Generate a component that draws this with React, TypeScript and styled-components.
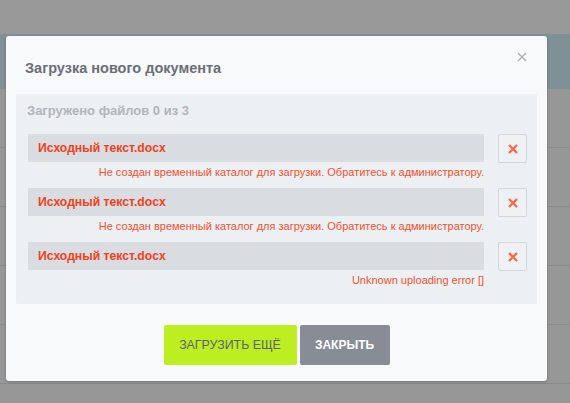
import React from "react";
import styled, { createGlobalStyle } from "styled-components";

const Global = createGlobalStyle`
  html, body { margin: 0; padding: 0; }
  body { font-family: "Liberation Sans", Arial, sans-serif; background: #979797; }
`;

const Page = styled.div`
  position: relative;
  width: 570px;
  height: 403px;
  overflow: hidden;
  display: flex;
  flex-direction: column;
`;

const TopBar = styled.div`
  height: 34px;
  background: #999999;
`;

const Band = styled.div`
  height: 55px;
  background: #7f9196;
`;

const BgRow = styled.div`
  height: 58px;
  border-bottom: 1px solid #8b8b8b;
  background: #979797;
`;

const Modal = styled.div`
  position: absolute;
  left: 6px;
  top: 36px;
  width: 541px;
  height: 345px;
  box-sizing: border-box;
  background: #f8f9fb;
  border-radius: 3px;
  box-shadow: 0 1px 3px rgba(0, 0, 0, 0.25);
  display: flex;
  flex-direction: column;
`;

const Header = styled.div`
  height: 58px;
  display: flex;
  align-items: center;
  padding: 0 19px;
  padding-top: 6px;
  box-sizing: border-box;
`;

const Title = styled.h3`
  margin: 0;
  font-size: 14.5px;
  font-weight: bold;
  color: #6a6e77;
`;

const Close = styled.button`
  position: absolute;
  right: 20px;
  top: 16px;
  width: 10px;
  height: 10px;
  padding: 0;
  border: 0;
  background: none;
  display: flex;
  align-items: center;
  justify-content: center;
`;

const Panel = styled.div`
  margin: 0 10px;
  background: #edf0f3;
  border-radius: 2px;
  padding: 9px 10px 16px 12px;
  height: 210px;
  box-sizing: border-box;
`;

const Counter = styled.div`
  font-size: 13px;
  line-height: 16px;
  font-weight: bold;
  color: #b2b5ba;
  letter-spacing: 0;
  margin: 0 0 15px -1px;
`;

const FileList = styled.div`
  display: flex;
  flex-direction: column;
  gap: 7px;
`;

const FileRow = styled.div`
  display: grid;
  grid-template-columns: 1fr 29px;
  column-gap: 14px;
`;

const FileBar = styled.div`
  height: 28px;
  background: #d9dce0;
  display: flex;
  align-items: center;
  padding-left: 10px;
  font-size: 12.2px;
  font-weight: bold;
  color: #f0421b;
`;

const RemoveButton = styled.button`
  width: 29px;
  height: 29px;
  box-sizing: border-box;
  border: 1px solid #d3d6da;
  border-radius: 2px;
  background: #eef1f4;
  padding: 0;
  display: flex;
  align-items: center;
  justify-content: center;
`;

const ErrorText = styled.div`
  grid-column: 1;
  height: 18px;
  line-height: 18px;
  text-align: right;
  font-size: 11px;
  color: #f3502e;
`;

const Footer = styled.div`
  display: flex;
  justify-content: center;
  gap: 3px;
  margin-top: 21px;
`;

const Btn = styled.button<{ $variant: "green" | "gray" }>`
  height: 40px;
  border: 0;
  border-radius: 2px;
  padding: 0;
  font-family: "Liberation Sans", Arial, sans-serif;
  font-size: ${(p) => (p.$variant === "green" ? "12.4px" : "12px")};
  text-transform: uppercase;
  font-weight: ${(p) => (p.$variant === "gray" ? "bold" : "normal")};
  background: ${(p) => (p.$variant === "green" ? "#bdee21" : "#878c96")};
  color: ${(p) => (p.$variant === "green" ? "#5b6272" : "#ffffff")};
  width: ${(p) => (p.$variant === "green" ? "133px" : "90px")};
`;

const CrossIcon = ({ size, color, stroke }: { size: number; color: string; stroke: number }) => (
  <svg width={size} height={size} viewBox="0 0 10 10">
    <path d="M1 1 L9 9 M9 1 L1 9" stroke={color} strokeWidth={stroke} strokeLinecap="butt" />
  </svg>
);

const files = [
  { name: "Исходный текст.docx", error: "Не создан временный каталог для загрузки. Обратитесь к администратору." },
  { name: "Исходный текст.docx", error: "Не создан временный каталог для загрузки. Обратитесь к администратору." },
  { name: "Исходный текст.docx", error: "Unknown uploading error []" },
];

export default function App() {
  return (
    <Page>
      <Global />
      <TopBar />
      <Band />
      <BgRow />
      <BgRow />
      <BgRow />
      <BgRow />
      <BgRow />
      <Modal>
        <Close>
          <CrossIcon size={10} color="#a9acb1" stroke={1.2} />
        </Close>
        <Header>
          <Title>Загрузка нового документа</Title>
        </Header>
        <Panel>
          <Counter>Загружено файлов 0 из 3</Counter>
          <FileList>
            {files.map((f, i) => (
              <FileRow key={i}>
                <FileBar>{f.name}</FileBar>
                <RemoveButton>
                  <CrossIcon size={10} color="#f26c4c" stroke={2.4} />
                </RemoveButton>
                <ErrorText>{f.error}</ErrorText>
              </FileRow>
            ))}
          </FileList>
        </Panel>
        <Footer>
          <Btn $variant="green">Загрузить ещё</Btn>
          <Btn $variant="gray">Закрыть</Btn>
        </Footer>
      </Modal>
    </Page>
  );
}
